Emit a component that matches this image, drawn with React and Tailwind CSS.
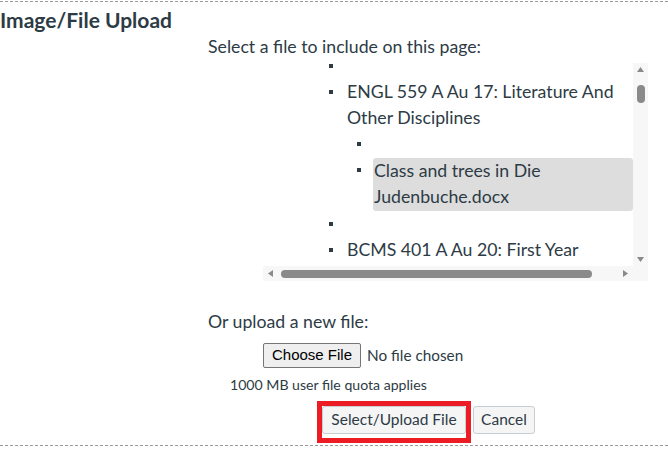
import React from 'react';

const Bullet = ({ left }) => (
  <span className={`block w-[4px] h-[4px] bg-[#2d3b45] shrink-0 mt-[11px] ${left}`} />
);

function Item({ level, children, highlight }) {
  const bulletLeft = level === 1 ? 'ml-[66px]' : 'ml-[94px]';
  return (
    <div className="flex">
      <Bullet left={bulletLeft} />
      {highlight ? (
        <div className="ml-[12px] mt-px pb-px pl-px w-[300px] bg-[#dddddd] rounded-[3px] whitespace-pre-line">
          {children}
        </div>
      ) : (
        <div className="ml-[14px] min-h-[26px] whitespace-pre-line">{children}</div>
      )}
    </div>
  );
}

function FileBrowser() {
  return (
    <div className="ml-[55px] w-[385px] grid grid-cols-[370px_15px] grid-rows-[203px_15px]">
      <div className="overflow-hidden">
        <div className="-mt-[10px] text-[17.7px] leading-[26px] whitespace-nowrap">
          <Item level={1}>{''}</Item>
          <Item level={1}>{'ENGL 559 A Au 17: Literature And\nOther Disciplines'}</Item>
          <Item level={2}>{''}</Item>
          <Item level={2} highlight>{'Class and trees in Die\nJudenbuche.docx'}</Item>
          <Item level={1}>{''}</Item>
          <Item level={1}>BCMS 401 A Au 20: First Year</Item>
        </div>
      </div>
      <div className="bg-[#f7f7f7] flex flex-col items-center">
        <svg width="7" height="5" viewBox="0 0 7 5" className="mt-[4px]">
          <polygon points="3.5,0 7,5 0,5" fill="#8a8a8a" />
        </svg>
        <div className="mt-[13px] w-[8px] h-[18px] rounded-full bg-[#8a8a8a]" />
        <div className="flex-1" />
        <svg width="7" height="5" viewBox="0 0 7 5" className="mb-[4px]">
          <polygon points="0,0 7,0 3.5,5" fill="#8a8a8a" />
        </svg>
      </div>
      <div className="bg-[#f7f7f7] flex items-center">
        <svg width="5" height="7" viewBox="0 0 5 7" className="ml-[5px]">
          <polygon points="5,0 5,7 0,3.5" fill="#8a8a8a" />
        </svg>
        <div className="ml-[8px] w-[311px] h-[8px] rounded-full bg-[#8a8a8a]" />
        <div className="flex-1" />
        <svg width="5" height="7" viewBox="0 0 5 7" className="mr-[5px]">
          <polygon points="0,0 5,3.5 0,7" fill="#8a8a8a" />
        </svg>
      </div>
      <div className="bg-[#f7f7f7]" />
    </div>
  );
}

export default function App() {
  return (
    <div className="w-[668px] h-[454px] bg-white text-[#2d3b45] font-['Lato',sans-serif] overflow-hidden">
      <div className="mt-px border-t border-dashed border-[#9a9a9a]" />
      <h2 className="mt-[4px] text-[21px] leading-[28px] font-bold">Image/File Upload</h2>
      <div className="pl-[208px]">
        <p className="mt-px text-[17.7px] leading-[24px]">Select a file to include on this page:</p>
        <div className="mt-[4px]">
          <FileBrowser />
        </div>
        <p className="mt-[29px] text-[17.7px] leading-[24px]">Or upload a new file:</p>
        <div className="mt-[9px] ml-[55px] flex items-center">
          <button className="h-[25px] px-[8px] bg-[#efefef] border border-[#767676] rounded-[2px] font-['Liberation_Sans',Arial,sans-serif] text-[15px] text-black">
            Choose File
          </button>
          <span className="ml-[6px] text-[15.3px] text-[#2d3b45]">No file chosen</span>
        </div>
        <p className="mt-[7px] ml-[22px] text-[14.1px] leading-[20px]">1000 MB user file quota applies</p>
        <div className="mt-[6px] ml-[109px] flex items-start">
          <div className="border-[5px] border-[#ec1c24] pb-[4px]">
            <button className="h-[28px] w-[144px] bg-[#f5f5f5] border border-[#c7cdd1] rounded-[3px] text-[15.5px] text-[#2d3b45]">
              Select/Upload File
            </button>
          </div>
          <button className="ml-[2px] mt-[5px] h-[28px] w-[62px] bg-[#f5f5f5] border border-[#c7cdd1] rounded-[3px] text-[15.5px] text-[#2d3b45]">
            Cancel
          </button>
        </div>
      </div>
      <div className="mt-[2px] border-t border-dashed border-[#9a9a9a]" />
    </div>
  );
}
